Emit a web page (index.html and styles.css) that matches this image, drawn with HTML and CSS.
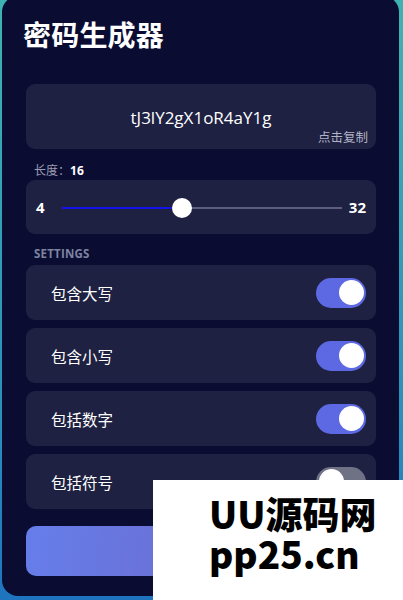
FILE: index.html
```html
<!DOCTYPE html>
<html lang="zh">
<head>
<meta charset="utf-8">
<title>密码生成器</title>
<link rel="stylesheet" href="styles.css">
</head>
<body>
<div class="card">
  <h1 class="title">密码生成器</h1>
  <div class="pwd-box">
    <div class="pwd">tJ3lY2gX1oR4aY1g</div>
    <span class="copy-hint">点击复制</span>
  </div>
  <div class="len-label">长度：<b>16</b></div>
  <div class="slider-box">
    <span class="min">4</span>
    <div class="track">
      <div class="fill" style="width: 43%"></div>
      <div class="thumb" style="left: 43%"></div>
    </div>
    <span class="max">32</span>
  </div>
  <div class="section">SETTINGS</div>
  <div class="options">
    <div class="row"><span>包含大写</span><span class="toggle on"><i></i></span></div>
    <div class="row"><span>包含小写</span><span class="toggle on"><i></i></span></div>
    <div class="row"><span>包括数字</span><span class="toggle on"><i></i></span></div>
    <div class="row"><span>包括符号</span><span class="toggle"><i></i></span></div>
  </div>
  <button class="gen" aria-label="生成密码"></button>
</div>
<div class="watermark">UU源码网<br>pp25.cn</div>
</body>
</html>
```

FILE: styles.css
```css
* { box-sizing: border-box; }
html, body { margin: 0; height: 100%; }
body {
  background: linear-gradient(to bottom, #3fb3b1, #2a8fba 70%, #1f74bf);
  font-family: "Open Sans", "Noto Sans CJK SC", sans-serif;
  color: #fff;
  overflow: hidden;
  position: relative;
}
.card {
  margin: -4px 0 0 2px;
  width: 397px;
  height: 600px;
  background: #0a0d31;
  border-radius: 16px;
  padding: 20px 23px 0 24px;
  display: flex;
  flex-direction: column;
}
.title {
  margin: 0 0 0 -3px;
  font-family: "Noto Sans CJK SC", sans-serif;
  font-size: 28px;
  font-weight: 700;
  line-height: 36px;
  letter-spacing: 0.2px;
}
.pwd-box {
  margin-top: 32px;
  height: 65px;
  background: #1e2141;
  border-radius: 9px;
  position: relative;
  display: flex;
  align-items: center;
  justify-content: center;
}
.pwd {
  font-size: 17px;
  margin-top: 2px;
}
.copy-hint {
  position: absolute;
  right: 8px;
  bottom: 3px;
  font-family: "Noto Sans CJK SC", sans-serif;
  font-size: 12.5px;
  color: #b1b4c6;
}
.len-label {
  margin: 11px 0 0 8px;
  font-family: "Noto Sans CJK SC", sans-serif;
  font-size: 12px;
  line-height: 19px;
  color: #9a9db3;
}
.len-label b { color: #fff; font-family: "Open Sans", sans-serif; font-weight: 700; }
.slider-box {
  height: 54px;
  background: #1e2141;
  border-radius: 9px;
  display: flex;
  align-items: center;
  padding: 0 10px;
  font-weight: 700;
  font-size: 15px;
}
.min { width: 26px; }
.max { margin-left: 7px; }
.track {
  flex: 1;
  height: 2px;
  background: #5b5d7a;
  position: relative;
  margin-top: 1px;
}
.fill { height: 100%; background: #1414e8; }
.thumb {
  position: absolute;
  top: 50%;
  width: 20px;
  height: 20px;
  margin: -10px 0 0 -10px;
  border-radius: 50%;
  background: #fff;
}
.section {
  margin: 12px 0 3px 8px;
  font-size: 11.5px;
  line-height: 16px;
  font-weight: 700;
  color: #7d84a0;
  letter-spacing: 0.2px;
}
.options { display: flex; flex-direction: column; gap: 8px; }
.row {
  height: 55px;
  background: #1e2141;
  border-radius: 9px;
  display: flex;
  align-items: center;
  justify-content: space-between;
  padding: 0 10px 0 25px;
  font-family: "Noto Sans CJK SC", sans-serif;
  font-size: 15.5px;
}
.toggle {
  width: 50px;
  height: 30px;
  border-radius: 15px;
  background: #6f7185;
  display: flex;
  align-items: center;
  padding: 0 2.5px;
}
.toggle i {
  width: 25px;
  height: 25px;
  border-radius: 50%;
  background: #fff;
}
.toggle.on { background: #5d69e2; justify-content: flex-end; }
.gen {
  margin-top: 17px;
  height: 50px;
  width: 100%;
  border: 0;
  border-radius: 10px;
  background: linear-gradient(100deg, #667eea, #764ba2 160%);
}
.watermark {
  position: absolute;
  left: 153px;
  top: 480px;
  width: 250px;
  height: 120px;
  background: #fff;
  color: #000;
  font-family: "Noto Sans CJK SC", sans-serif;
  font-weight: 900;
  font-size: 37px;
  line-height: 40px;
  padding: 13px 0 0 56px;
  white-space: nowrap;
}
```
